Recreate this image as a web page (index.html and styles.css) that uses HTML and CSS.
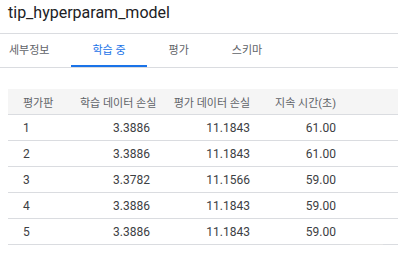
FILE: index.html
```html
<!DOCTYPE html>
<html lang="ko">
<head>
<meta charset="utf-8">
<link rel="stylesheet" href="styles.css">
</head>
<body>
<div class="title-bar"><span class="title">tip_hyperparam_model</span></div>
<nav class="tabs">
  <div class="tab first">세부정보</div>
  <div class="tab active">학습 중</div>
  <div class="tab">평가</div>
  <div class="tab">스키마</div>
</nav>
<div class="table-wrap">
  <table class="grid">
    <colgroup>
      <col class="c1"><col class="c2"><col class="c3"><col class="c4"><col class="c5">
    </colgroup>
    <thead>
      <tr><th class="left">평가판</th><th>학습 데이터 손실</th><th>평가 데이터 손실</th><th>지속 시간(초)</th><th></th></tr>
    </thead>
    <tbody>
      <tr><td class="left">1</td><td>3.3886</td><td>11.1843</td><td>61.00</td><td></td></tr>
      <tr><td class="left">2</td><td>3.3886</td><td>11.1843</td><td>61.00</td><td></td></tr>
      <tr><td class="left">3</td><td>3.3782</td><td>11.1566</td><td>59.00</td><td></td></tr>
      <tr><td class="left">4</td><td>3.3886</td><td>11.1843</td><td>59.00</td><td></td></tr>
      <tr><td class="left">5</td><td>3.3886</td><td>11.1843</td><td>59.00</td><td></td></tr>
    </tbody>
  </table>
  <div class="thumb"></div>
</div>
</body>
</html>
```
FILE: styles.css
```css
html, body {
  margin: 0;
  padding: 0;
  background: #ffffff;
  font-family: Roboto, "Noto Sans CJK KR", sans-serif;
  color: #3c4043;
}
.title-bar {
  height: 33px;
  padding-left: 8px;
  border-bottom: 1px solid #dadce0;
}
.title {
  display: block;
  padding-top: 3px;
  font-size: 16px;
  line-height: 20px;
  color: #202124;
}
.tabs {
  display: flex;
  height: 33px;
  border-bottom: 1px solid #dadce0;
}
.tab {
  padding: 0 21.5px;
  font-size: 11px;
  line-height: 33px;
  color: #5f6368;
  box-sizing: border-box;
  height: 33px;
}
.tab.first {
  padding-left: 9px;
}
.tab.active {
  color: #1a73e8;
  border-bottom: 2px solid #1a73e8;
}
.table-wrap {
  position: relative;
  margin: 21px 0 0 8px;
  width: 390px;
}
.grid {
  width: 390px;
  table-layout: fixed;
  border-collapse: collapse;
  font-size: 12px;
}
.c1 { width: 72px; }
.c2 { width: 70px; }
.c3 { width: 100px; }
.c4 { width: 86px; }
.grid th, .grid td {
  height: 25px;
  padding: 0;
  text-align: right;
  white-space: nowrap;
  border-bottom: 1px solid #dadce0;
}
.grid th {
  background: #f5f5f5;
  font-weight: 400;
  color: #5f6368;
  font-size: 11px;
}
.grid td {
  color: #3c4043;
}
.grid .left {
  text-align: left;
  padding-left: 15px;
}
.thumb {
  position: absolute;
  left: 342px;
  bottom: -1px;
  width: 33px;
  height: 2px;
  background: #e3e3e3;
}
```
